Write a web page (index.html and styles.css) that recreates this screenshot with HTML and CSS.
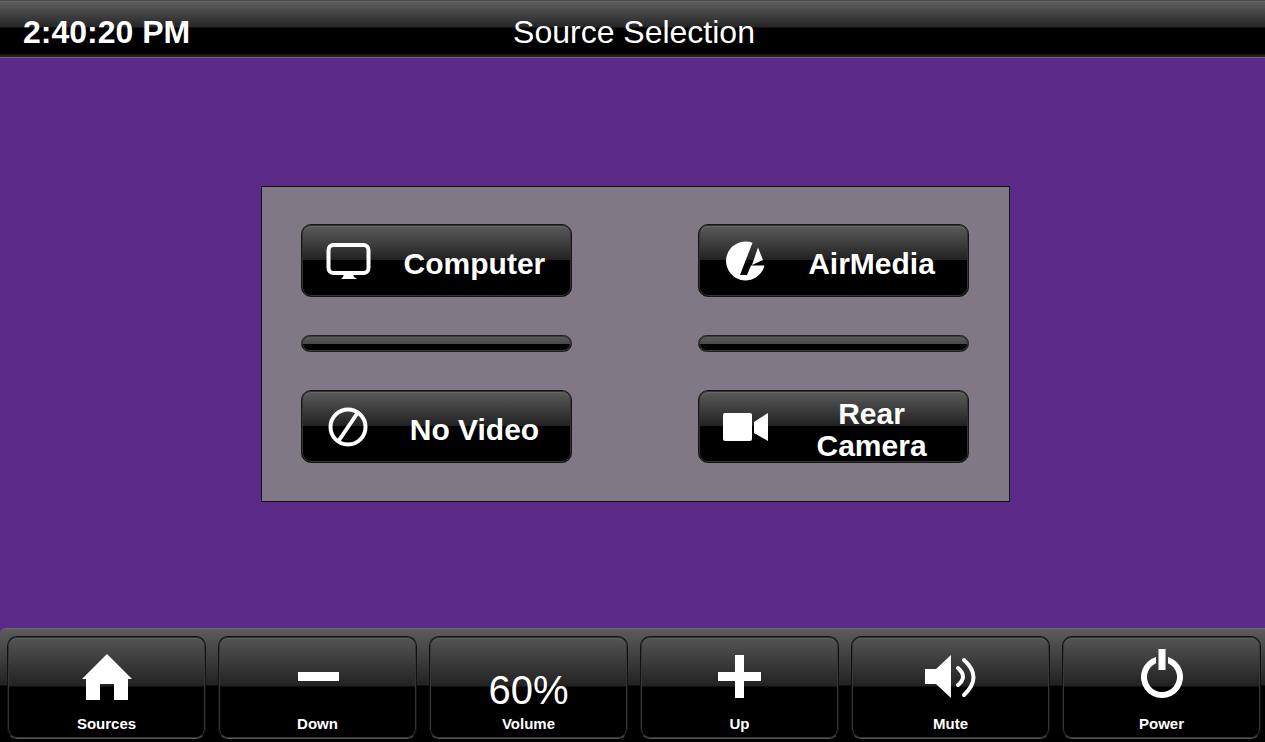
FILE: index.html
```
<!DOCTYPE html>
<html lang="en">
<head>
    <meta charset="UTF-8">
    <meta name="viewport" content="width=device-width, initial-scale=1.0">
    <title>Source Selection</title>
    <link rel="stylesheet" href="styles.css">
</head>
<body>
    <!-- Top Bar -->
    <header class="topbar">
        <time class="clock">2:40:20 PM</time>
        <h1 class="title">Source Selection</h1>
    </header>

    <!-- Sources -->
    <main class="stage">
        <div class="panel">
            <button class="source">
                <svg class="source-icon" viewBox="0 0 48 48">
                    <rect x="4.500" y="8" width="40" height="28" rx="5" fill="none" stroke="#fff" stroke-width="4"/>
                    <path d="M20 37h9l1 3 3 2H17l2-2z" fill="#fff"/>
                </svg>
                <span class="source-label">Computer</span>
            </button>
            <button class="source">
                <svg class="source-icon" viewBox="0 0 48 48">
                    <path d="M31.500 5.800A19.500 19.500 0 1 0 43.500 28.500H30L26 38H19z" fill="#fff"/>
                    <path d="M37 10.500L42 23 31 28z" fill="#fff"/>
                </svg>
                <span class="source-label">AirMedia</span>
            </button>

            <div class="bar"></div>
            <div class="bar"></div>

            <button class="source">
                <svg class="source-icon" viewBox="0 0 48 48">
                    <circle cx="24" cy="24" r="17.500" fill="none" stroke="#fff" stroke-width="4"/>
                    <path d="M14.500 38L33.500 10" stroke="#fff" stroke-width="4"/>
                </svg>
                <span class="source-label">No Video</span>
            </button>
            <button class="source">
                <svg class="source-icon" viewBox="0 0 48 48">
                    <rect x="2" y="10" width="29" height="28" rx="2" fill="#fff"/>
                    <path d="M33 19L47 10V38L33 30z" fill="#fff"/>
                </svg>
                <span class="source-label">Rear Camera</span>
            </button>
        </div>
    </main>

    <!-- Bottom Bar -->
    <footer class="toolbar">
        <button class="tool">
            <svg class="tool-icon" viewBox="0 0 56 56">
                <path d="M28 5L53 30H49V51H35V35H21V51H7V30H3z" fill="#fff"/>
            </svg>
            <span class="tool-label">Sources</span>
        </button>
        <button class="tool">
            <svg class="tool-icon" viewBox="0 0 56 56">
                <rect x="8" y="23" width="41" height="9" fill="#fff"/>
            </svg>
            <span class="tool-label">Down</span>
        </button>
        <div class="tool">
            <output class="level" id="level" aria-labelledby="level-label">60%</output>
            <span class="tool-label" id="level-label">Volume</span>
        </div>
        <button class="tool">
            <svg class="tool-icon" viewBox="0 0 56 56">
                <path d="M23 6H32V23H49V32H32V49H23V32H6V23H23z" fill="#fff"/>
            </svg>
            <span class="tool-label">Up</span>
        </button>
        <button class="tool">
            <svg class="tool-icon" viewBox="0 0 56 56">
                <path d="M2 20H13L28 6V49L13 35H2z" fill="#fff"/>
                <path d="M35 19Q45 28 35 36M41 11Q60 28 41 46" fill="none" stroke="#fff" stroke-width="4" stroke-linecap="round"/>
            </svg>
            <span class="tool-label">Mute</span>
        </button>
        <button class="tool">
            <svg class="tool-icon" viewBox="0 0 56 56">
                <path d="M22 7.900A21 21 0 1 0 34 7.900V14.300A15 15 0 1 1 22 14.300z" fill="#fff"/>
                <rect x="24.500" y="0" width="7" height="21" fill="#fff"/>
            </svg>
            <span class="tool-label">Power</span>
        </button>
    </footer>
</body>
</html>
```

FILE: styles.css
```
* {
    box-sizing: border-box;
}

/* Body Styling */
body {
    margin: 0;
    min-height: 100vh;
    display: flex;
    flex-direction: column;
    font-family: "Liberation Sans", Arial, sans-serif;
    color: white;
    background: #5b2a89;
}

button {
    font-family: inherit;
    color: inherit;
    cursor: pointer;
}

/* Top Bar */
.topbar {
    height: 58px;
    display: grid;
    grid-template-columns: 1fr auto 1fr;
    align-items: center;
    padding: 5px 20px 0 23px;
    line-height: 38px;
    border-top: 1px solid #4a4a4a;
    border-bottom: 1px solid #6b6b6b;
    background: linear-gradient(#666666 0, #5a5a5a 2px, #262626 26px, #000000 27px, #000000 53px, #222222 54px);
}

.clock {
    font-size: 32px;
    font-weight: bold;
}

.title {
    margin: 0;
    font-size: 32px;
    font-weight: normal;
}

/* Source Panel */
.stage {
    flex: 1;
    display: flex;
    justify-content: center;
    align-items: center;
    padding: 2px 0 0 6px;
}

.panel {
    width: 59.5%;
    min-width: 640px;
    display: grid;
    grid-template-columns: 271px 271px;
    justify-content: space-between;
    row-gap: 38px;
    padding: 37px 40px 38px 39px;
    border: 1px solid #141018;
    background: #807884;
}

.source {
    height: 73px;
    display: flex;
    align-items: center;
    padding: 0 14px 0 22px;
    border: 1px solid #151515;
    border-radius: 10px;
    background: linear-gradient(#5c5c5c, #222222 49%, #000000 50%);
    box-shadow: inset 0 0 0 1px #333333, inset 0 2px 1px #666666;
}

.source-icon {
    width: 48px;
    height: 48px;
    flex: none;
}

.source-label {
    flex: 1;
    margin-left: 20px;
    padding-top: 6px;
    font-size: 30px;
    font-weight: bold;
    line-height: 32px;
}

.bar {
    height: 17px;
    border: 1px solid #202020;
    border-radius: 9px;
    background: linear-gradient(#5c5c5c, #4a4a4a 50%, #000000 51%);
    box-shadow: inset 0 0 0 1px #3a3a3a;
}

/* Bottom Bar */
.toolbar {
    display: grid;
    grid-template-columns: repeat(6, 1fr);
    gap: 12px;
    padding: 7px 4px 3px 7px;
    border-top: 1px solid #6b6b6b;
    border-radius: 6px 0 0 0;
    background: linear-gradient(#5c5c5c, #222222 56px, #000000 57px);
}

.tool {
    height: 103px;
    display: flex;
    flex-direction: column;
    align-items: center;
    justify-content: flex-end;
    padding: 0 0 5px;
    border: 1px solid #111111;
    border-bottom-color: #555555;
    border-radius: 10px;
    background: linear-gradient(#555555, #222222 49px, #000000 50px);
    box-shadow: inset 0 0 0 1px #363636, inset 0 2px 1px #5e5e5e;
}

.tool-icon {
    width: 56px;
    height: 56px;
    margin-bottom: 10px;
}

.tool-label {
    font-size: 15px;
    font-weight: bold;
    line-height: 18px;
}

.level {
    font-size: 40px;
    line-height: 46px;
    margin-bottom: 2px;
}
```
